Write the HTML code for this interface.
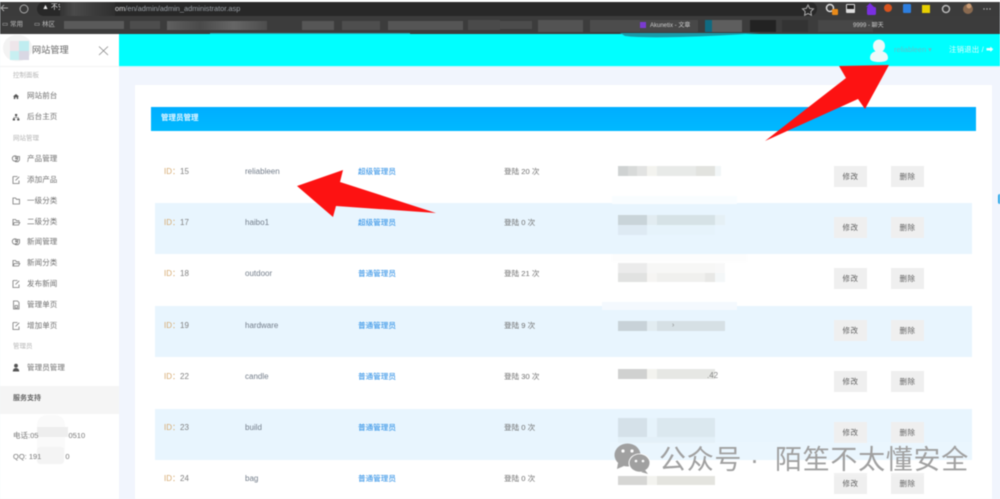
<!DOCTYPE html>
<html lang="zh"><head><meta charset="utf-8"><title>管理员管理</title>
<style>
html,body{margin:0;padding:0;width:1000px;height:499px;overflow:hidden;background:#f1f5fd}
body{position:relative;font-family:"Liberation Sans","Noto Sans CJK SC",sans-serif;font-size:8px;color:#777}
.a{position:absolute;white-space:nowrap}
#soft{position:absolute;left:0;top:0;width:1000px;height:499px;filter:blur(.5px)}
.m{left:27px;font-size:7.5px;color:#6e6e6e;line-height:10px;letter-spacing:.1px}
.g{left:13px;font-size:6.5px;color:#b5b5b5;line-height:9px}
.row{position:absolute;left:155px;width:817px;height:51px;background:#e8f5fe}
.t{line-height:10px;font-size:8px;margin-top:1px}
.id{left:164px;color:#808080}.id b{font-weight:normal;color:#d6aa70}
.n{left:245px;color:#737d8a}
.r{left:358px;color:#2088e4;font-size:7.6px}
.l{left:504px;color:#6e6e6e;font-size:7.6px}
.b{position:absolute;width:33px;height:21px;background:#efefef;color:#5f5f5f;font-size:7.5px;line-height:21px;text-align:center;letter-spacing:.5px}
.px{position:absolute;display:flex;height:10px}
.px i{display:block;height:100%}
</style></head><body>
<div id="soft">
<!-- browser chrome -->
<div class="a" style="left:0;top:0;width:1000px;height:2px;background:#fff"></div>
<div class="a" style="left:0;top:2px;width:1000px;height:15px;background:#3b3b3b"></div>
<div class="a" style="left:37px;top:2px;width:780px;height:14px;background:#282828;border-radius:7px"></div>
<div class="a" style="left:0;top:16px;width:1000px;height:18px;background:#3c3c3c"></div>
<svg class="a" style="left:0;top:2px" width="32" height="14" viewBox="0 0 32 14" fill="none" stroke="#aaa" stroke-width="1"><path d="M8 6H1M4 3 1 6l3 3"/><circle cx="24" cy="7" r="4"/></svg>
<div class="a" style="left:42px;top:3px;font-size:7px;line-height:10px;color:#eee">▲ 不安</div>
<div class="a" style="left:60px;top:2px;width:55px;height:14px;background:linear-gradient(90deg,#333,#4a4a4a 25%,#3c3c3c 60%,#2f2f2f)"></div>
<div class="a" style="left:115px;top:4px;font-size:7.4px;line-height:10px;color:#9aa0a6"><span style="color:#ddd">om</span>/en/admin/admin_administrator.asp</div>
<div class="a" style="left:2px;top:20px;font-size:6.5px;line-height:9px;color:#bbb">▭ 常用</div>
<div class="a" style="left:34px;top:20px;font-size:6.5px;line-height:9px;color:#bbb">▭ 林区</div>
<div class="a" style="left:64px;top:21px;width:60px;height:8px;background:#5a5a5a"></div>
<div class="a" style="left:130px;top:21px;width:30px;height:8px;background:#4d4d4d"></div>
<div class="a" style="left:167px;top:21px;width:100px;height:9px;background:linear-gradient(90deg,#5f5f5f,#4a4a4a,#666,#4d4d4d)"></div>
<div class="a" style="left:302px;top:21px;width:32px;height:9px;background:#565656"></div>
<div class="a" style="left:342px;top:21px;width:38px;height:9px;background:#4e4e4e"></div>
<div class="a" style="left:388px;top:21px;width:75px;height:9px;background:#555"></div>
<div class="a" style="left:468px;top:20px;width:32px;height:10px;background:#4a4a4a"></div>
<div class="a" style="left:500px;top:21px;width:32px;height:8px;background:#4c4c4c"></div>
<div class="a" style="left:538px;top:20px;width:45px;height:12px;background:#535353"></div>
<div class="a" style="left:590px;top:20px;width:50px;height:12px;background:#4c4c4c"></div>
<div class="a" style="left:640px;top:20px;width:58px;height:12px;background:#484848"></div>
<div class="a" style="left:640px;top:22px;width:6px;height:6px;background:#7a3bd0"></div>
<div class="a" style="left:650px;top:22px;font-size:6px;line-height:9px;color:#ccc">Akunetix - 文章</div>
<div class="a" style="left:705px;top:20px;width:7px;height:12px;background:#106a80"></div>
<div class="a" style="left:712px;top:20px;width:30px;height:12px;background:#5e5e5e"></div>
<div class="a" style="left:750px;top:20px;width:26px;height:12px;background:#222"></div>
<div class="a" style="left:782px;top:20px;width:26px;height:12px;background:#333"></div>
<div class="a" style="left:818px;top:20px;width:55px;height:12px;background:#474747"></div>
<div class="a" style="left:853px;top:22px;font-size:6px;line-height:9px;color:#ccc">9999 - 聊天</div>
<svg class="a" style="left:800px;top:2px" width="195" height="16" viewBox="0 0 195 16">
<path d="M8 3l1.700 3.400 3.800.5-2.700 2.600.6 3.700L8 11.500l-3.400 1.700.6-3.700L2.500 6.900l3.800-.5z" fill="none" stroke="#aaa"/>
<circle cx="30" cy="6" r="3.500" fill="none" stroke="#ddd" stroke-width="1.500"/><rect x="32" y="7" width="6" height="6" rx="1" fill="#e88a1a"/>
<rect x="46" y="2" width="9" height="9" rx="1" fill="#ddd"/><rect x="47" y="3" width="7" height="4" fill="#222"/>
<path d="M70 1l4 4h-8z" fill="#7a2fe0"/><rect x="67" y="5" width="9" height="8" rx="1.500" fill="#7a2fe0"/>
<circle cx="88" cy="6" r="4" fill="#d9541e"/><rect x="103" y="2" width="8" height="9" rx="1" fill="#2d7fe0"/>
<rect x="122" y="3" width="8" height="8" fill="#e8d000"/><circle cx="146" cy="7" r="3.500" fill="none" stroke="#bbb" stroke-width="1.500"/>
<circle cx="168" cy="7" r="5" fill="#8a6a50"/><circle cx="169" cy="4" r="2.500" fill="#c89a72"/>
<circle cx="184" cy="7" r=".7" fill="#bbb"/><circle cx="187" cy="7" r=".7" fill="#bbb"/><circle cx="190" cy="7" r=".7" fill="#bbb"/></svg>

<!-- header -->
<div class="a" style="left:119px;top:34px;width:881px;height:32px;background:#00ffff"></div>
<div class="a" style="left:119px;top:66px;width:881px;height:1px;background:#c8f6fb"></div>
<svg class="a" style="left:200px;top:32px" width="600" height="8"><path d="M420 1H560Q520 4 480 5 440 6 425 4z" fill="#1a9aa8"/><path d="M10 1 210 1V2H10z" fill="#2aa5b0"/></svg>
<svg class="a" style="left:869px;top:39px" width="20" height="23" viewBox="0 0 20 23"><ellipse cx="10" cy="7" rx="6" ry="6.500" fill="#eef9f9"/><path d="M1 19c0-5 4-7 9-7s9 2 9 7c0 3-4 4-9 4s-9-1-9-4z" fill="#eef9f9"/></svg>
<div class="a" style="left:894px;top:45px;font-size:7.4px;line-height:10px;color:#5fc2cc">reliableen ▾</div>
<div class="a" style="left:949px;top:45px;font-size:7.4px;line-height:10px;color:#e6fcfc;letter-spacing:.2px">注销退出 / ➡</div>

<!-- sidebar -->
<div class="a" style="left:0;top:34px;width:119px;height:465px;background:#fff"></div>
<div class="a" style="left:0;top:66px;width:119px;height:1px;background:#f3f3f3"></div>
<div class="a" style="left:3px;top:35px;width:29px;height:26px;background:#f3f3f3;border-radius:14px"></div>
<div class="a" style="left:10px;top:41px;width:9px;height:10px;background:#eee6ea"></div>
<div class="a" style="left:19px;top:41px;width:10px;height:10px;background:#c0edf0"></div>
<div class="a" style="left:10px;top:51px;width:9px;height:9px;background:#c8eff1"></div>
<div class="a" style="left:19px;top:51px;width:10px;height:9px;background:#d9d8e4"></div>
<div class="a" style="left:32px;top:44px;font-size:9.200px;line-height:12px;color:#666">网站管理</div>
<svg class="a" style="left:98px;top:45px" width="11" height="11" fill="none" stroke="#888" stroke-width=".8"><path d="M1 1.500 10 10M10 1.500 1 10"/></svg>

<div class="a g" style="top:71px">控制面板</div>
<div class="a m" style="top:91px">网站前台</div>
<div class="a m" style="top:112px">后台主页</div>
<div class="a g" style="top:134px">网站管理</div>
<div class="a m" style="top:154px">产品管理</div>
<div class="a m" style="top:175px">添加产品</div>
<div class="a m" style="top:196px">一级分类</div>
<div class="a m" style="top:217px">二级分类</div>
<div class="a m" style="top:237px">新闻管理</div>
<div class="a m" style="top:258px">新闻分类</div>
<div class="a m" style="top:279px">发布新闻</div>
<div class="a m" style="top:300px">管理单页</div>
<div class="a m" style="top:321px">增加单页</div>
<div class="a g" style="top:342px">管理员</div>
<div class="a m" style="top:363px">管理员管理</div>
<svg class="a" style="left:0;top:0" width="30" height="380" fill="none" stroke="#777" stroke-width=".8">
<path d="M13 96.500 16 94l3 2.500h-.8V99h-1.500v-1.700h-1.400V99h-1.500v-2.500z" fill="#555" stroke="none"/>
<path d="M15 114h2.200v2H15zM12.800 118.500h2.200v2h-2.200zM17.200 118.500h2.200v2h-2.200z" fill="#555" stroke="none"/><path d="M16.100 116v1.500M13.900 118.500v-1h4.400v1" stroke="#555" stroke-width=".6"/>
<circle cx="15" cy="158.500" r="2.700"/><path d="M15 156.500l2 2.200h-2M17 156.500h2.500V160L18 161.700h-2.500v-1.500"/>
<path d="M13 176.500h4.500M13 176.500v7h6v-3M15.500 180.500l3.700-3.700"/>
<path d="M13 204v-6h2.500l1 1.300h3V204z"/>
<path d="M13 225v-5.500h2.500l1 1.300h2.500v1M13 225h5.500l1.300-2.500h-5.500z"/>
<circle cx="15" cy="241.500" r="2.700"/><path d="M15 239.500l2 2.200h-2M17 239.500h2.500V243L18 244.700h-2.500v-1.500"/>
<path d="M13 266v-5.500h2.500l1 1.300h2.500v1M13 266h5.500l1.300-2.500h-5.500z"/>
<path d="M13 280.500h4.500M13 280.500v7h6v-3M15.500 284.500l3.700-3.700"/>
<path d="M13.500 301h4l1.500 1.500v6.500h-5.500zM15 305.500h2.500v2.500H15z"/>
<path d="M13 322.500h4.500M13 322.500v7h6v-3M15.500 326.500l3.700-3.700"/>
<circle cx="16" cy="365.700" r="1.900" fill="#555" stroke="none"/><path d="M12.800 371.500c0-2.500 1.500-3.500 3.200-3.500s3.200 1 3.200 3.500z" fill="#555" stroke="none"/>
</svg>
<div class="a" style="left:0;top:386px;width:119px;height:28px;background:#f5f5f5"></div>
<div class="a" style="left:13px;top:394px;font-size:7px;line-height:10px;font-weight:bold;color:#666">服务支持</div>
<div class="a" style="left:37px;top:415px;width:28px;height:47px;background:#fafafa;border-radius:10px"></div>
<div class="a" style="left:37px;top:427px;width:31px;height:10px;background:#eeeeee"></div>
<div class="a" style="left:37px;top:447px;width:27px;height:17px;background:#f4f4f4;border-radius:3px"></div>
<div class="a" style="left:13px;top:431px;font-size:7.500px;line-height:10px;color:#777">电话:05<span style="display:inline-block;width:30px"></span>0510</div>
<div class="a" style="left:13px;top:452px;font-size:7.500px;line-height:10px;color:#777">QQ: 191<span style="display:inline-block;width:24px"></span>0</div>

<!-- card -->
<div class="a" style="left:135px;top:85px;width:857px;height:414px;background:#fff"></div>
<div class="a" style="left:151px;top:107px;width:825px;height:24px;background:linear-gradient(#00aeff,#00b9ff)"></div>
<div class="a" style="left:161px;top:113px;font-size:7.500px;line-height:10px;font-weight:bold;color:#e4f6ff">管理员管理</div>

<div class="row" style="top:203px"></div>
<div class="row" style="top:306px"></div>
<div class="row" style="top:409px"></div>

<!-- rows -->
<div class="a t id" style="top:166px"><b>ID：</b>15</div><div class="a t n" style="top:166px">reliableen</div><div class="a t r" style="top:166px">超级管理员</div><div class="a t l" style="top:166px">登陆 20 次</div>
<div class="a t id" style="top:217px"><b>ID：</b>17</div><div class="a t n" style="top:217px">haibo1</div><div class="a t r" style="top:217px">超级管理员</div><div class="a t l" style="top:217px">登陆 0 次</div>
<div class="a t id" style="top:268px"><b>ID：</b>18</div><div class="a t n" style="top:268px">outdoor</div><div class="a t r" style="top:268px">普通管理员</div><div class="a t l" style="top:268px">登陆 21 次</div>
<div class="a t id" style="top:320px"><b>ID：</b>19</div><div class="a t n" style="top:320px">hardware</div><div class="a t r" style="top:320px">普通管理员</div><div class="a t l" style="top:320px">登陆 9 次</div>
<div class="a t id" style="top:371px"><b>ID：</b>22</div><div class="a t n" style="top:371px">candle</div><div class="a t r" style="top:371px">普通管理员</div><div class="a t l" style="top:371px">登陆 30 次</div>
<div class="a t id" style="top:422px"><b>ID：</b>23</div><div class="a t n" style="top:422px">build</div><div class="a t r" style="top:422px">普通管理员</div><div class="a t l" style="top:422px">登陆 0 次</div>
<div class="a t id" style="top:473px"><b>ID：</b>24</div><div class="a t n" style="top:473px">bag</div><div class="a t r" style="top:473px">普通管理员</div><div class="a t l" style="top:473px">登陆 0 次</div>

<!-- blurred IPs -->
<div class="a" style="left:612px;top:196px;width:125px;height:8px;background:#f9fdff"></div>
<div class="px" style="left:618px;top:166px"><i style="width:10px;background:#cfd2d2"></i><i style="width:9px;background:#d8dad9"></i><i style="width:10px;background:#e2e3e2"></i><i style="width:10px;background:#f3f3ef"></i><i style="width:39px;background:#e8eae8"></i><i style="width:19px;background:#e2e3df"></i><i style="width:6px;background:#f2f6f7"></i></div>
<div class="px" style="left:618px;top:215px"><i style="width:29px;background:#c9d4d9"></i><i style="width:10px;background:#e2ecf1"></i><i style="width:58px;background:#d6e2e6"></i><i style="width:10px;background:#e5f0f5"></i></div>
<div class="px" style="left:618px;top:225px"><i style="width:29px;background:#deeaf3"></i><i style="width:68px;background:#e6f3fb"></i></div>
<div class="a" style="left:612px;top:254px;width:135px;height:8px;background:#fdfdfd"></div>
<div class="px" style="left:618px;top:263px;height:10px"><i style="width:29px;background:#ebebeb"></i><i style="width:68px;background:#f7f7f6"></i><i style="width:10px;background:#f8f8f8"></i></div>
<div class="px" style="left:618px;top:273px;height:9px"><i style="width:29px;background:#e1e2e1"></i><i style="width:10px;background:#f6f5f3"></i><i style="width:48px;background:#f0f0ee"></i><i style="width:10px;background:#e8e8e6"></i><i style="width:10px;background:#f4f7f8"></i></div>
<div class="a" style="left:602px;top:302px;width:135px;height:8px;background:#f4f9fe"></div>
<div class="px" style="left:618px;top:321px"><i style="width:29px;background:#c8d2d8"></i><i style="width:10px;background:#e2ecf1"></i><i style="width:68px;background:#d6e0e5"></i></div>
<div class="a" style="left:672px;top:321px;font-size:7px;line-height:9px;color:#888">›</div>
<div class="px" style="left:618px;top:369px"><i style="width:29px;background:#d0d1d0"></i><i style="width:10px;background:#f3f3ef"></i><i style="width:58px;background:#e6e7e4"></i></div>
<div class="a" style="left:707px;top:371px;font-size:8px;line-height:10px;color:#888">.42</div>
<div class="px" style="left:618px;top:418px;height:19px"><i style="width:29px;background:#d5e1e9"></i><i style="width:10px;background:#e6f3fb"></i><i style="width:58px;background:#dbe8ef"></i></div>
<div class="a" style="left:618px;top:437px;width:97px;height:6px;background:#e3f0f8"></div>
<div class="px" style="left:618px;top:476px;height:9px"><i style="width:29px;background:#d6d6d4"></i><i style="width:10px;background:#f3f3ef"></i><i style="width:58px;background:#e4e4df"></i></div>

<!-- buttons -->
<div class="b" style="left:834px;top:166px">修改</div><div class="b" style="left:891px;top:166px">删除</div>
<div class="b" style="left:834px;top:217px">修改</div><div class="b" style="left:891px;top:217px">删除</div>
<div class="b" style="left:834px;top:268px">修改</div><div class="b" style="left:891px;top:268px">删除</div>
<div class="b" style="left:834px;top:320px">修改</div><div class="b" style="left:891px;top:320px">删除</div>
<div class="b" style="left:834px;top:371px">修改</div><div class="b" style="left:891px;top:371px">删除</div>
<div class="b" style="left:834px;top:422px">修改</div><div class="b" style="left:891px;top:422px">删除</div>
<div class="b" style="left:834px;top:473px">修改</div><div class="b" style="left:891px;top:473px">删除</div>
<div class="a" style="left:998px;top:194px;width:2px;height:10px;background:#2aa7e8;border-radius:2px 0 0 2px"></div>

<!-- arrows -->
<svg class="a" style="left:0;top:0" width="1000" height="499">
<path d="M765 141 858 99 865 109 889 65 839 66 846 78z" fill="#fd1212"/>
<path d="M436 213 340 182 343 170 297 186 333 217 336 206z" fill="#fd1212"/>
</svg>

<!-- watermark -->
<div class="a" style="left:610px;top:442px;width:362px;height:34px;background:rgba(255,255,255,.12)"></div>
<svg class="a" style="left:612px;top:442px" width="50" height="34" viewBox="0 0 50 34">
<ellipse cx="15.500" cy="13" rx="13" ry="11.500" fill="#a0a0a0"/><path d="M6 21l-1 6 7-3z" fill="#a0a0a0"/>
<ellipse cx="27.500" cy="21" rx="11" ry="9.500" fill="#fff"/>
<ellipse cx="27.500" cy="21" rx="10" ry="8.700" fill="#a0a0a0"/><path d="M33 28l3 4-7-2z" fill="#a0a0a0"/>
<circle cx="11" cy="9" r="1.600" fill="#fff"/><circle cx="20" cy="9" r="1.600" fill="#fff"/><circle cx="24" cy="19" r="1.300" fill="#fff"/><circle cx="31" cy="19" r="1.300" fill="#fff"/>
</svg>
<div class="a" style="left:659px;top:443px;font-size:27px;line-height:34px;color:#a0a0a0;letter-spacing:.7px">公众号</div>
<div class="a" style="left:750px;top:443px;font-size:27px;line-height:34px;color:#a0a0a0">·</div>
<div class="a" style="left:775px;top:443px;font-size:27px;line-height:34px;color:#a0a0a0;letter-spacing:.7px">陌笙不太懂安全</div>
</div>
</body></html>
